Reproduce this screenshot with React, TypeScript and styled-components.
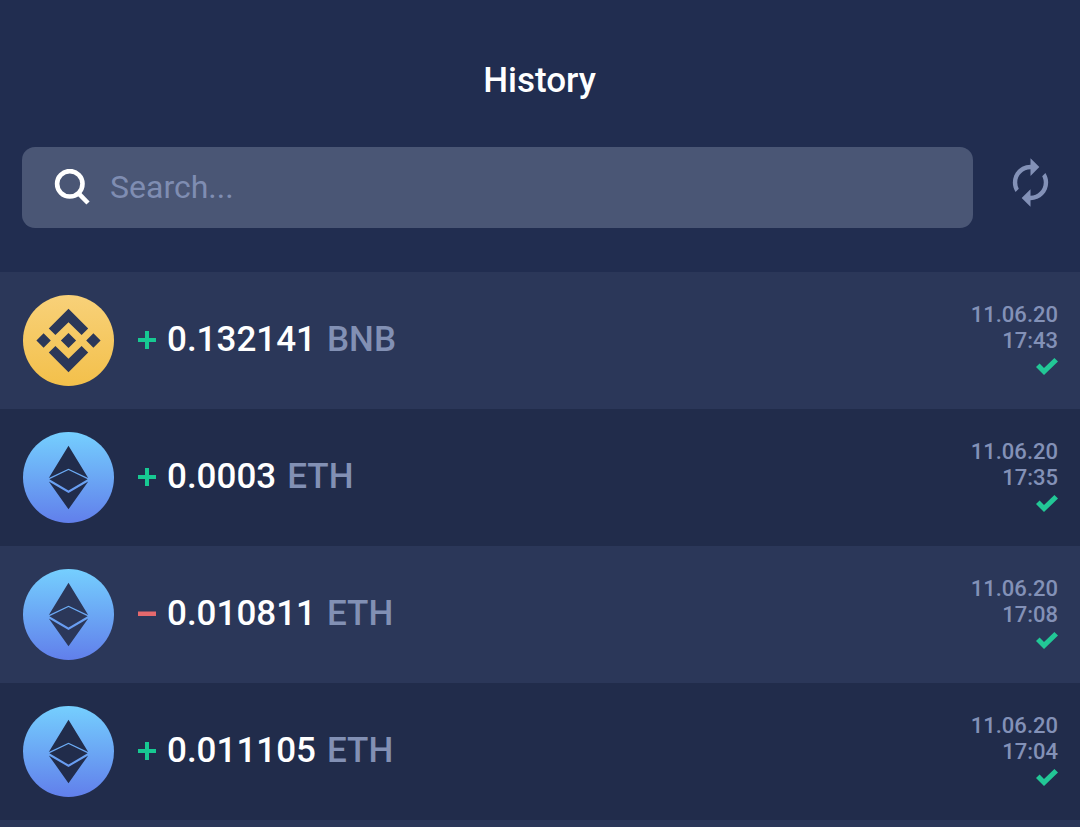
import React from "react";
import styled, { createGlobalStyle } from "styled-components";
import { MdAutorenew } from "react-icons/md";

const GlobalStyle = createGlobalStyle`
  * { box-sizing: border-box; }
  body {
    margin: 0;
    background: #212d50;
    font-family: Roboto, "Liberation Sans", sans-serif;
    color: #ffffff;
  }
`;

const Screen = styled.main`
  min-height: 100vh;
  display: flex;
  flex-direction: column;
`;

const Header = styled.header`
  padding: 61px 23px 44px 22px;
`;

const Title = styled.h1`
  margin: 0 0 46px;
  font-size: 35px;
  line-height: 40px;
  font-weight: 500;
  text-align: center;
`;

const Toolbar = styled.div`
  display: flex;
  align-items: center;
  gap: 31px;
`;

const SearchField = styled.label`
  flex: 1;
  height: 81px;
  display: flex;
  align-items: center;
  gap: 20px;
  padding: 0 32px 2px;
  border-radius: 13px;
  background: #4a5675;
`;

const SearchInput = styled.input`
  flex: 1;
  min-width: 0;
  padding: 0;
  border: 0;
  outline: 0;
  background: transparent;
  color: #ffffff;
  font-family: inherit;
  font-size: 32px;
  line-height: 40px;
  &::placeholder {
    color: #7f8db2;
    opacity: 1;
  }
`;

const RefreshButton = styled.button`
  display: flex;
  padding: 0 0 10px;
  border: 0;
  background: none;
  color: #8391b7;
  font-size: 53px;
  cursor: pointer;
`;

const List = styled.ul`
  flex: 1;
  margin: 0;
  padding: 0;
  list-style: none;
  background: #2b3759;
`;

const Row = styled.li`
  min-height: 137px;
  display: flex;
  align-items: center;
  padding: 0 22px 0 23px;
  background: #2b3759;
  &:nth-child(even) {
    background: #212c4b;
  }
`;

const Coin = styled.svg`
  flex: none;
  width: 91px;
  height: 91px;
  margin-right: 24px;
`;

const Amount = styled.div`
  flex: 1;
  display: flex;
  align-items: center;
  padding-bottom: 2px;
  font-size: 35px;
  line-height: 40px;
  font-weight: 500;
`;

const Sign = styled.svg<{ $incoming: boolean }>`
  width: 18px;
  height: 18px;
  margin-right: 11px;
  fill: ${(p) => (p.$incoming ? "#17c992" : "#e5696d")};
`;

const Unit = styled.span`
  margin-left: 11px;
  color: #8290b4;
`;

const Status = styled.div`
  display: flex;
  flex-direction: column;
  align-items: flex-end;
  color: #8391b7;
  font-size: 22px;
  line-height: 26px;
  font-weight: 500;
`;

const Check = styled.svg`
  width: 22px;
  height: 17px;
  margin: 4px 0;
  fill: #22c796;
`;

const SearchIcon = () => (
  <svg width="36" height="36" viewBox="0 0 36 36" fill="none" stroke="#fff" aria-hidden="true">
    <circle cx="15.8" cy="14.8" r="12.7" strokeWidth="4.6" />
    <path d="M23.6 23.4 34 34" strokeWidth="4.6" />
  </svg>
);

const BnbCoin = () => (
  <Coin viewBox="0 0 91 91" role="img" aria-label="BNB">
    <defs>
      <linearGradient id="bnb" x1="0" y1="0" x2="0" y2="1">
        <stop offset="0" stopColor="#f8d179" />
        <stop offset="1" stopColor="#f3c04b" />
      </linearGradient>
    </defs>
    <circle cx="45.5" cy="45.5" r="45.5" fill="url(#bnb)" />
    <path
      fill="#2b3759"
      d="M45.5 13.8 65.2 33.5 58.6 40.1 45.5 27.2 32.4 40.1 25.8 33.5ZM45.5 77.2 65.2 57.5 58.6 50.9 45.5 63.8 32.4 50.9 25.8 57.5ZM45.5 37.9 53.1 45.5 45.5 53.1 37.9 45.5ZM20.6 38.3 27.8 45.5 20.6 52.7 13.4 45.5ZM70.4 38.3 77.6 45.5 70.4 52.7 63.2 45.5Z"
    />
  </Coin>
);

const EthCoin = ({ id, ink }: { id: string; ink: string }) => (
  <Coin viewBox="0 0 91 91" role="img" aria-label="ETH">
    <defs>
      <linearGradient id={id} x1="0" y1="0" x2="0" y2="1">
        <stop offset="0" stopColor="#75cffe" />
        <stop offset="1" stopColor="#617feb" />
      </linearGradient>
    </defs>
    <circle cx="45.5" cy="45.5" r="45.5" fill={`url(#${id})`} />
    <path
      fill={ink}
      d="M45.5 13.7 65.2 46 45.5 36.8 25.8 46ZM45.5 38 64.6 47.2 45.5 58.6 26.4 47.2ZM25.8 49.4 45.5 61 65.2 49.4 45.5 77.2Z"
    />
  </Coin>
);

type Transaction = {
  amount: string;
  unit: "BNB" | "ETH";
  incoming: boolean;
  time: string;
};

const transactions: Transaction[] = [
  { amount: "0.132141", unit: "BNB", incoming: true, time: "17:43" },
  { amount: "0.0003", unit: "ETH", incoming: true, time: "17:35" },
  { amount: "0.010811", unit: "ETH", incoming: false, time: "17:08" },
  { amount: "0.011105", unit: "ETH", incoming: true, time: "17:04" },
];

export default function App() {
  return (
    <Screen>
      <GlobalStyle />
      <Header>
        <Title>History</Title>
        <Toolbar>
          <SearchField>
            <SearchIcon />
            <SearchInput type="text" placeholder="Search..." aria-label="Search" />
          </SearchField>
          <RefreshButton type="button" aria-label="Refresh">
            <MdAutorenew />
          </RefreshButton>
        </Toolbar>
      </Header>
      <List>
        {transactions.map((t, i) => (
          <Row key={t.time}>
            {t.unit === "BNB" ? (
              <BnbCoin />
            ) : (
              <EthCoin id={`eth-${i}`} ink={i % 2 ? "#212c4b" : "#2b3759"} />
            )}
            <Amount>
              <Sign
                $incoming={t.incoming}
                viewBox="0 0 18 18"
                role="img"
                aria-label={t.incoming ? "Received" : "Sent"}
              >
                <path d={t.incoming ? "M7 0h4v7h7v4h-7v7H7v-7H0V7h7Z" : "M0 6.5h18v4.5H0Z"} />
              </Sign>
              <span>{t.amount}</span>
              <Unit>{t.unit}</Unit>
            </Amount>
            <Status>
              <time>11.06.20</time>
              <time>{t.time}</time>
              <Check viewBox="0 0 22 17" role="img" aria-label="Confirmed">
                <path d="M0 9 3.6 5.5 8 10 18.4 0 22 3.4 8 17Z" />
              </Check>
            </Status>
          </Row>
        ))}
      </List>
    </Screen>
  );
}
